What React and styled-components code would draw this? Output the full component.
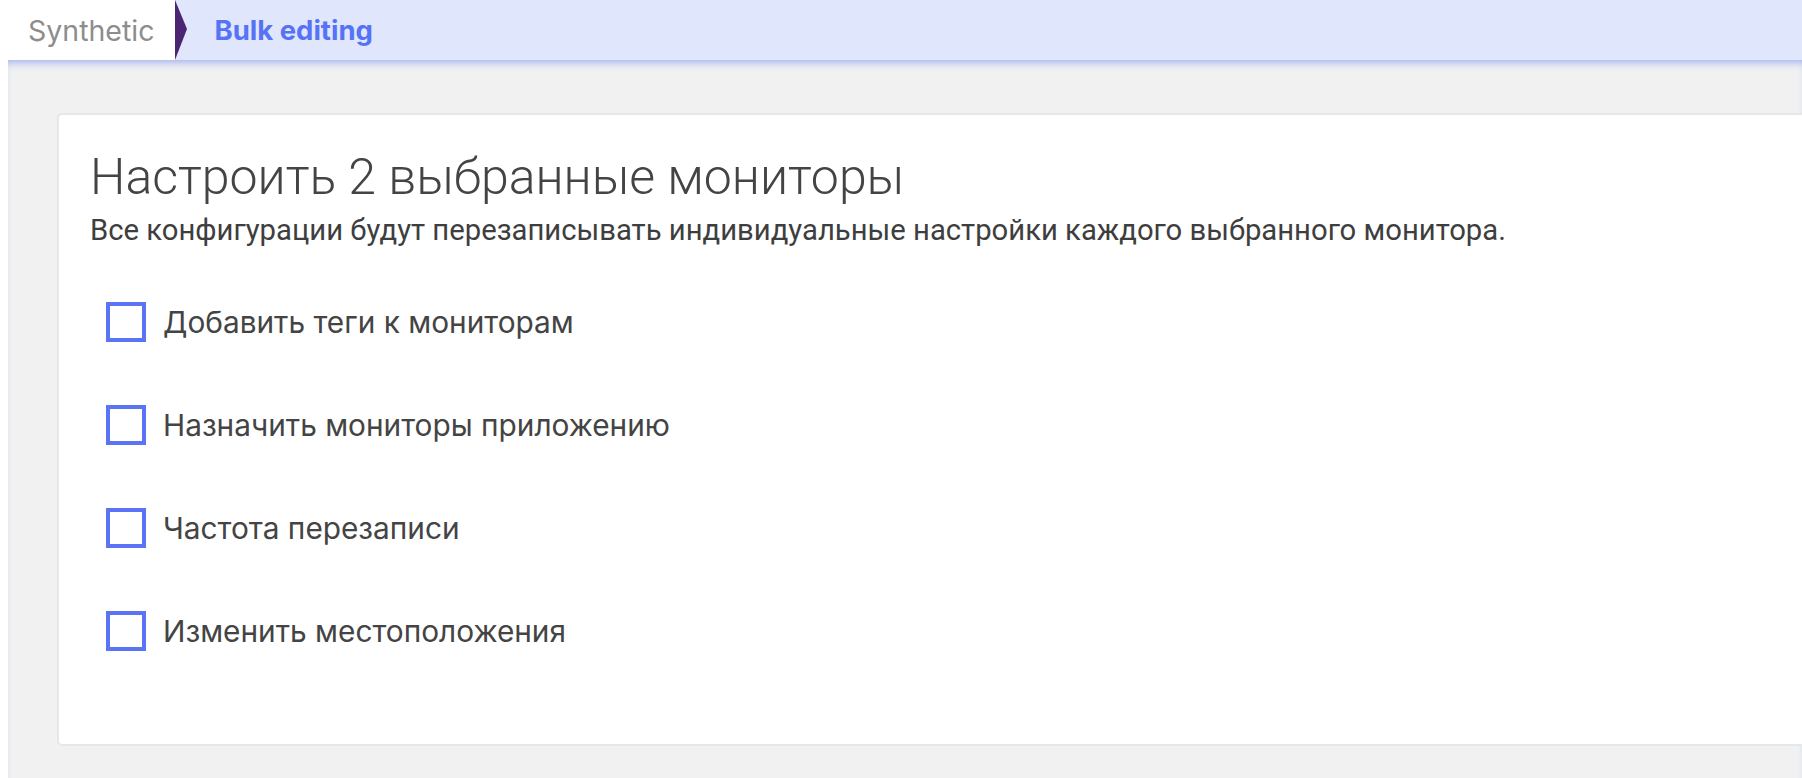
import styled, { createGlobalStyle } from 'styled-components'

const GlobalStyle = createGlobalStyle`
	html, body {
		margin: 0;
		padding: 0;
		background: #ffffff;
	}
	body {
		font-family: Inter, 'Liberation Sans', sans-serif;
	}
`

const options = [
	'Добавить теги к мониторам',
	'Назначить мониторы приложению',
	'Частота перезаписи',
	'Изменить местоположения',
]

const App = () => {
	return (
		<>
			<GlobalStyle />
			<Header>
				<Crumb>Synthetic</Crumb>
				<Arrow viewBox='0 0 12 60' preserveAspectRatio='none'>
					<polygon points='0,0 12,29 0,60' fill='#4b2472' />
				</Arrow>
				<CurrentCrumb>Bulk editing</CurrentCrumb>
			</Header>
			<Main>
				<Card>
					<Title>Настроить 2 выбранные мониторы</Title>
					<Subtitle>
						Все конфигурации будут перезаписывать индивидуальные настройки
						каждого выбранного монитора.
					</Subtitle>
					<OptionList>
						{options.map((label) => (
							<Option key={label}>
								<Box />
								<Label>{label}</Label>
							</Option>
						))}
					</OptionList>
				</Card>
			</Main>
		</>
	)
}

const Header = styled.header`
	display: flex;
	align-items: stretch;
	height: 60px;
	background: #e0e6fb;
	position: relative;
	z-index: 2;
`

const Crumb = styled.div`
	display: flex;
	align-items: center;
	padding: 0 21px 0 28px;
	background: #ffffff;
	color: #8d8d8d;
	font-size: 28.5px;
	font-weight: 400;
`

const Arrow = styled.svg`
	width: 12px;
	height: 60px;
	display: block;
`

const CurrentCrumb = styled.div`
	display: flex;
	align-items: center;
	padding-left: 27px;
	color: #5573f4;
	font-size: 27.5px;
	font-weight: 700;
`

const Main = styled.main`
	margin-left: 8px;
	height: 718px;
	box-sizing: border-box;
	padding: 53px 0 0 49px;
	background: #f1f1f1;
	overflow: hidden;
	box-shadow: inset 0 7px 8px -5px rgba(120, 145, 240, 0.75);
`

const Card = styled.section`
	box-sizing: border-box;
	height: 633px;
	margin-right: -20px;
	padding: 32px 31px;
	background: #ffffff;
	border: 2px solid #e5e8e8;
	border-radius: 5px;
`

const Title = styled.h1`
	margin: 0;
	font-family: Roboto, 'Liberation Sans', sans-serif;
	font-weight: 300;
	font-size: 50px;
	line-height: 60px;
	color: #444444;
`

const Subtitle = styled.p`
	margin: 4px 0 0;
	font-family: Roboto, 'Liberation Sans', sans-serif;
	font-size: 29.25px;
	line-height: 38px;
	color: #3e3e3e;
`

const OptionList = styled.div`
	display: flex;
	flex-direction: column;
	gap: 63px;
	margin-top: 53px;
	padding-left: 16px;
`

const Option = styled.label`
	display: flex;
	align-items: center;
	gap: 17px;
	height: 40px;
`

const Box = styled.span`
	box-sizing: border-box;
	width: 40px;
	height: 40px;
	border: 4px solid #5b74f5;
	background: #ffffff;
	flex-shrink: 0;
`

const Label = styled.span`
	font-size: 29.8px;
	color: #444444;
`

export default App
